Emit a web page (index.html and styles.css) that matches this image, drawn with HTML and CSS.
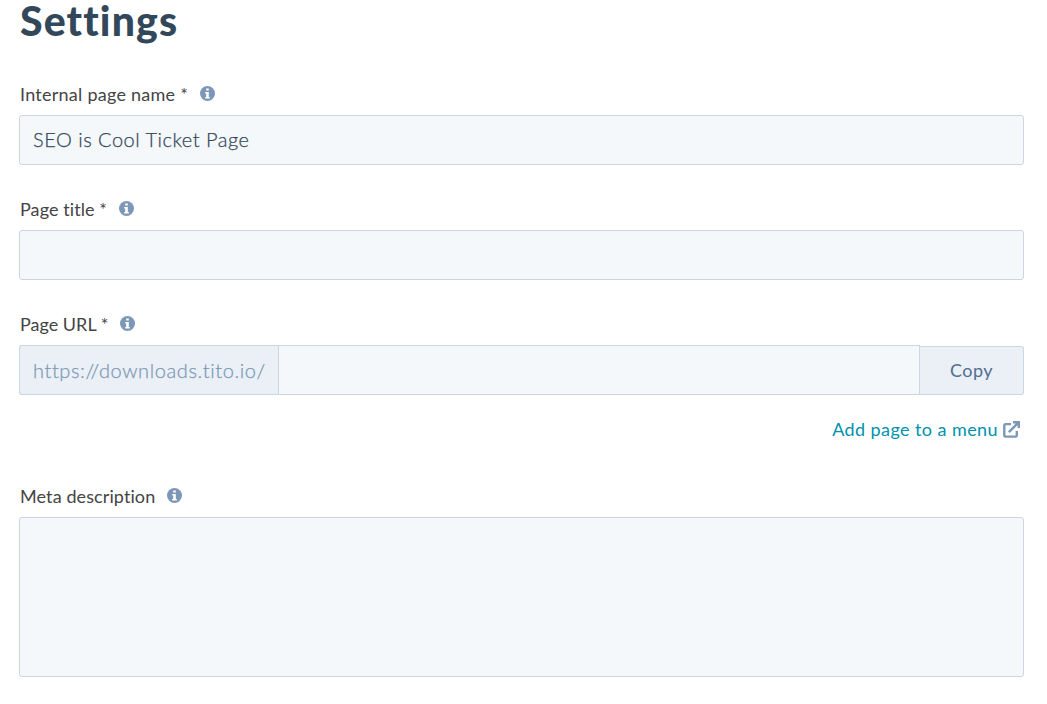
FILE: index.html
```html
<!DOCTYPE html>
<html lang="en">
<head>
    <meta charset="UTF-8">
    <meta name="viewport" content="width=device-width, initial-scale=1.0">
    <title>Settings</title>
    <link rel="stylesheet" href="styles.css">
</head>
<body>

    <svg class="sprite" width="0" height="0">
        <symbol id="info" viewBox="0 0 15 15">
            <circle cx="7.5" cy="7.5" r="7.5" fill="#7c98b6"/>
            <path d="M6.2 2.5h2.6v2H6.2zM5.2 6h3.6v4.9h1v1.5H5.2v-1.5h1V7.5h-1z" fill="#fff"/>
        </symbol>
    </svg>

    <form class="settings">
        <h1>Settings</h1>

        <div class="field">
            <div class="label-row">
                <label for="pageName" class="label-name">Internal page name *</label>
                <svg class="info"><use href="#info"/></svg>
            </div>
            <input type="text" id="pageName" class="control" value="SEO is Cool Ticket Page">
        </div>

        <div class="field">
            <div class="label-row">
                <label for="pageTitle" class="label-title">Page title *</label>
                <svg class="info"><use href="#info"/></svg>
            </div>
            <input type="text" id="pageTitle" class="control">
        </div>

        <div class="field url-field">
            <div class="label-row">
                <label for="pageUrl">Page URL *</label>
                <svg class="info"><use href="#info"/></svg>
            </div>
            <div class="url-group">
                <span class="url-prefix">https://downloads.tito.io/</span>
                <input type="text" id="pageUrl" class="control">
                <button type="button" class="copy">Copy</button>
            </div>
        </div>

        <div class="menu-row">
            <a href="#" class="menu-link">Add page to a menu</a>
            <svg class="external" viewBox="0 0 17 17" fill="none" stroke="#7c98b6" stroke-width="2.4">
                <path d="M8 3.1H2.6q-1.3 0-1.3 1.3v9.9q0 1.3 1.3 1.3h9.9q1.3 0 1.3-1.3V10"/>
                <path d="M5.8 11.2L14.6 2.4M10 1.3h5.8v5.8"/>
            </svg>
        </div>

        <div class="field">
            <div class="label-row">
                <label for="metaDescription" class="label-meta">Meta description</label>
                <svg class="info"><use href="#info"/></svg>
            </div>
            <textarea id="metaDescription" class="control"></textarea>
        </div>
    </form>

</body>
</html>
```
FILE: styles.css
```css
* {
    box-sizing: border-box;
}

body {
    font-family: Lato, "Liberation Sans", sans-serif;
    background-color: #fff;
    margin: 0;
    color: #33475b;
}

.sprite {
    display: block;
}

.settings {
    width: 1005px;
    margin-left: 19px;
}

h1 {
    margin: 0 0 38px;
    padding-left: 1px;
    font-size: 41px;
    line-height: 42px;
    font-weight: 900;
    letter-spacing: 1.15px;
}

.field {
    margin-bottom: 30px;
}

.label-row {
    display: flex;
    align-items: flex-start;
    height: 35px;
    padding-left: 1px;
}

label {
    font-size: 18px;
    line-height: 28px;
    letter-spacing: 0.01px;
    color: #444;
    white-space: nowrap;
}

.label-name {
    letter-spacing: 0.25px;
}

.label-title {
    letter-spacing: 0.08px;
}

.label-meta {
    letter-spacing: 0.1px;
}

.info {
    width: 15px;
    height: 15px;
    margin: 6px 0 0 12px;
}

.control {
    display: block;
    width: 100%;
    height: 50px;
    margin: 0;
    padding: 0 13px 2px;
    border: 1px solid #cbd6e2;
    border-radius: 3px;
    outline: none;
    background-color: #f5f8fa;
    font-family: inherit;
    font-size: 20px;
    font-weight: 300;
    letter-spacing: 0.5px;
    color: #33475b;
    -webkit-text-stroke: 0.25px;
}

textarea.control {
    height: 160px;
    resize: none;
}

.url-field {
    margin-bottom: 20px;
}

.url-group {
    display: flex;
    align-items: flex-end;
}

.url-prefix {
    width: 259px;
    height: 50px;
    padding-left: 13px;
    border: 1px solid #cbd6e2;
    border-right: none;
    border-radius: 3px 0 0 3px;
    background-color: #eaf0f6;
    font-size: 20px;
    font-weight: 300;
    line-height: 48px;
    letter-spacing: 0.6px;
    color: #7c98b6;
    white-space: nowrap;
    -webkit-text-stroke: 0.25px;
}

.url-group .control {
    flex: 1;
    width: auto;
    min-width: 0;
    border-radius: 0;
}

.copy {
    width: 104px;
    height: 49px;
    padding: 0 0 2px;
    border: 1px solid #cbd6e2;
    border-left: none;
    border-radius: 0 3px 3px 0;
    background-color: #eaf0f6;
    font-family: inherit;
    font-size: 18px;
    letter-spacing: 0.5px;
    color: #506e91;
}

.menu-row {
    display: flex;
    justify-content: flex-end;
    height: 67px;
    padding-right: 4px;
}

.menu-link {
    font-size: 18px;
    line-height: 28px;
    letter-spacing: 0.42px;
    color: #0091ae;
    text-decoration: none;
}

.external {
    width: 17px;
    height: 17px;
    margin: 6px 0 0 5px;
}
```
